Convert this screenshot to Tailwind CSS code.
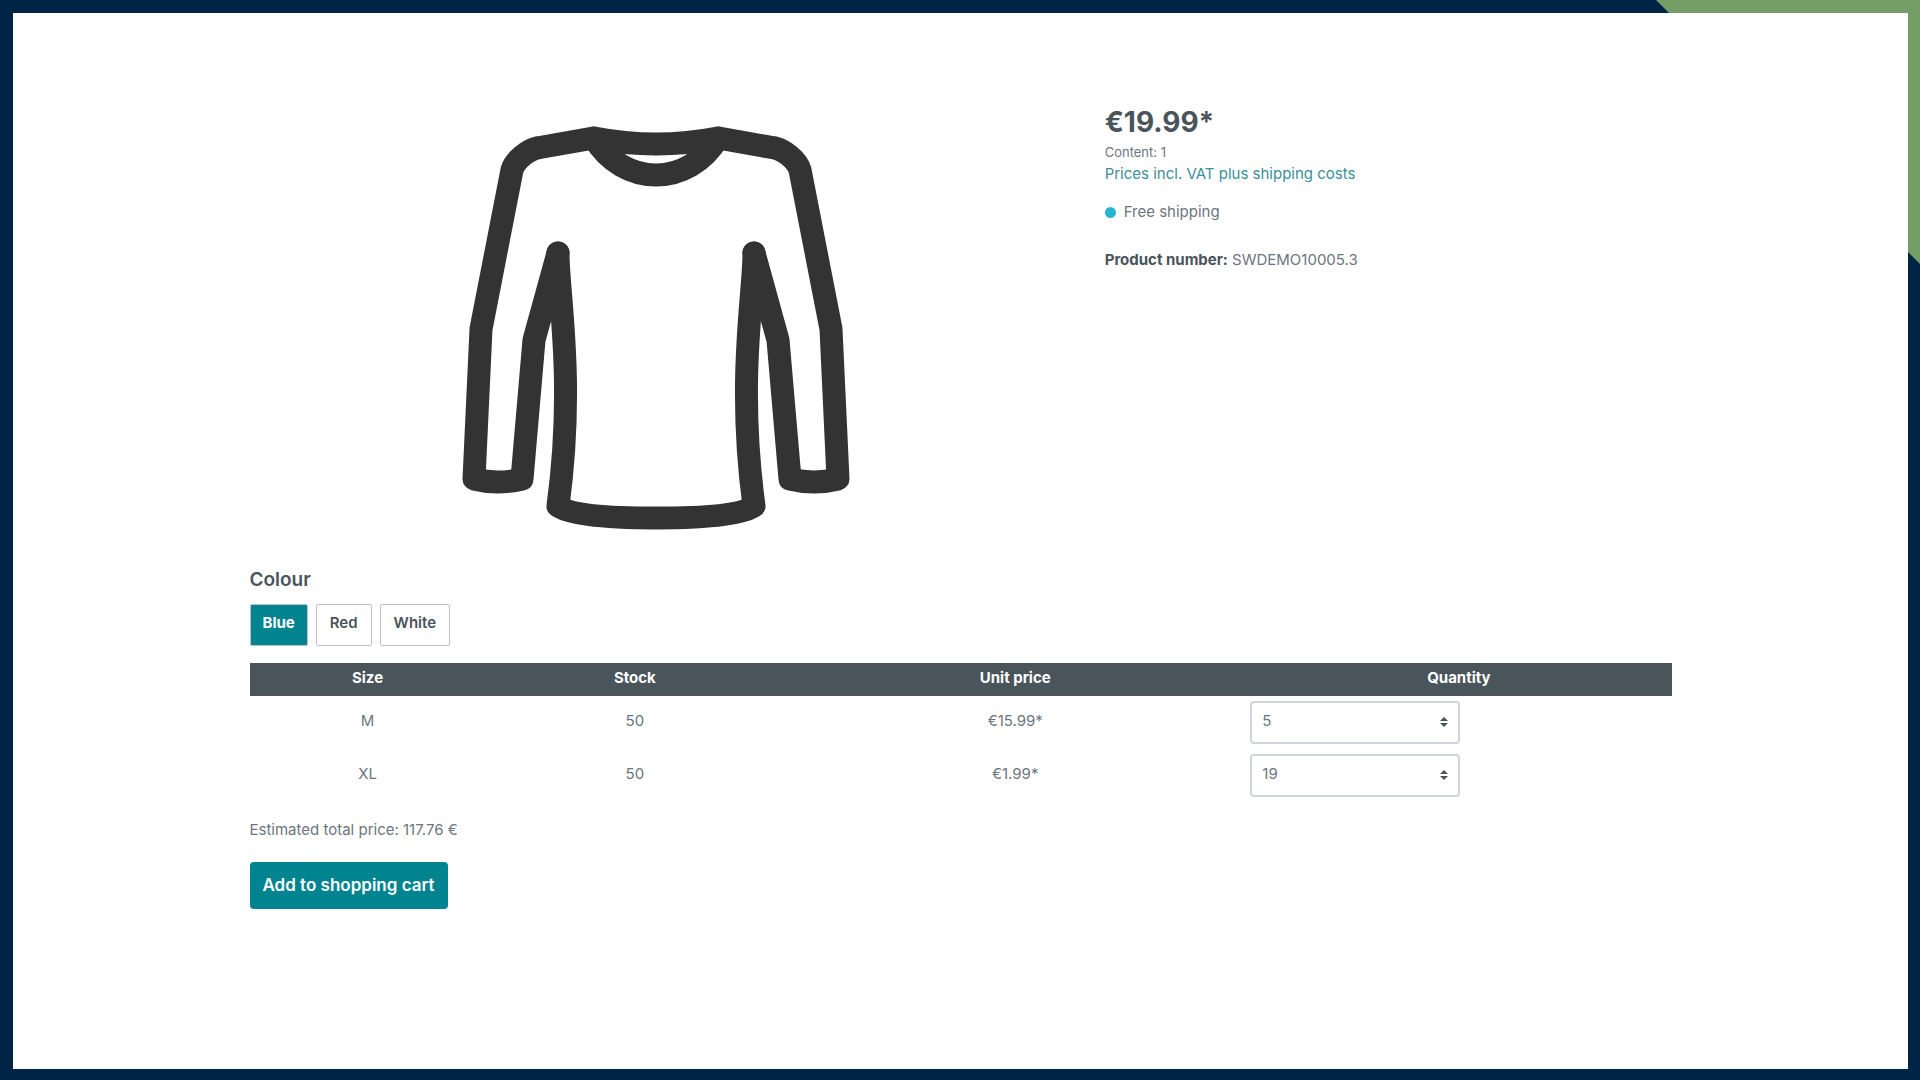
<!DOCTYPE html>
<html lang="en">
<head>
  <meta charset="UTF-8">
  <meta name="viewport" content="width=device-width, initial-scale=1.0">
  <title>Product detail</title>
  <script src="https://cdn.jsdelivr.net/npm/@tailwindcss/browser@4"></script>
</head>
<body class="font-['Inter',sans-serif] text-[15px] text-[#6c7680] antialiased">
  <div class="relative flex min-h-screen bg-[#002446] pt-[13px] pr-3 pb-[11px] pl-[13px]">
    <div class="absolute top-0 right-0 size-66 bg-[#759d66] [clip-path:polygon(0_0,100%_0,100%_100%)]"></div>

    <main class="relative flex-1 bg-white px-4 pt-[87px] pb-12">
      <div class="mx-auto max-w-[1422px]">

        <section class="grid grid-cols-12 gap-11">
          <div class="col-span-7 flex justify-center pt-5 pl-0.5">
            <svg class="h-[416px] w-[400px]" viewBox="0 0 400 416" fill="none" stroke="#333" stroke-width="23" stroke-linejoin="round" stroke-linecap="round" role="img" aria-label="Longsleeve">
              <!-- neckline -->
              <path stroke-linejoin="miter" stroke-linecap="butt" d="M81 28L138 18Q200 30 262 18L319 28" />
              <path stroke-linecap="butt" d="M138 18C152 42 176 55 200 55S248 42 262 18" />
              <!-- shoulders and sleeves -->
              <path d="M81 28C72 30 59 40 56 50L25 209L18 359Q42 365 66 359L78 220L102 133" />
              <path d="M319 28C328 30 341 40 344 50L375 209L382 359Q358 365 334 359L322 220L298 133" />
              <!-- body -->
              <path d="M102 133C102 175 119 260 102 386C115 396 160 398 200 398S285 396 298 386C281 260 298 175 298 133" />
            </svg>
          </div>

          <div class="col-span-5 pt-1">
            <p class="text-[28px] leading-9 font-bold text-[#4a545b]">€19.99*</p>
            <p class="text-[13px] leading-6">Content: 1</p>
            <a href="#" class="block leading-5 text-[#3c8f9b]">Prices incl. VAT plus shipping costs</a>
            <p class="mt-4 flex items-center gap-2 leading-6">
              <span class="size-[11px] rounded-full bg-[#26b6cf]"></span>
              Free shipping
            </p>
            <p class="mt-6 leading-6"><strong class="font-bold text-[#4a545b]">Product number:</strong> SWDEMO10005.3</p>
          </div>
        </section>

        <section class="mt-7">
          <h2 class="text-[19px] leading-8 font-semibold text-[#4a545b]">Colour</h2>
          <div class="mt-2 flex gap-2 font-semibold text-[#4a545b]">
            <button type="button" class="h-[42px] rounded-xs border border-[#bcc1c7] bg-[#00848f] px-3 pb-1 font-bold text-white">Blue</button>
            <button type="button" class="h-[42px] rounded-xs border border-[#bcc1c7] px-[13px] pb-1">Red</button>
            <button type="button" class="h-[42px] rounded-xs border border-[#bcc1c7] px-[13px] pb-1">White</button>
          </div>
        </section>

        <table class="mt-[17px] w-full table-fixed text-center">
          <thead class="bg-[#4a545b] text-white">
            <tr class="h-[33px] leading-7">
              <th class="w-[16.6%] pb-1 font-bold">Size</th>
              <th class="w-[21%] pb-1 font-bold">Stock</th>
              <th class="w-[32.5%] pb-1 font-bold">Unit price</th>
              <th class="w-[29.9%] pb-1 font-bold">Quantity</th>
            </tr>
          </thead>
          <tbody>
            <tr class="h-[53px]">
              <td class="pb-0.5">M</td>
              <td class="pb-0.5">50</td>
              <td class="pb-0.5">€15.99*</td>
              <td class="pl-1">
                <div class="relative w-[210px]">
                  <select aria-label="Quantity M" class="h-[43px] w-full appearance-none rounded-sm border-2 border-[#d1d5db] bg-white px-2.5 pb-0.5">
                    <option>5</option>
                  </select>
                  <svg class="pointer-events-none absolute top-[15px] right-3 h-3 w-2" viewBox="0 0 8 12" fill="#4a545b"><path d="M4 1L8 5H0ZM4 11L0 7H8Z" /></svg>
                </div>
              </td>
            </tr>
            <tr class="h-[53px]">
              <td class="pb-0.5">XL</td>
              <td class="pb-0.5">50</td>
              <td class="pb-0.5">€1.99*</td>
              <td class="pl-1">
                <div class="relative w-[210px]">
                  <select aria-label="Quantity XL" class="h-[43px] w-full appearance-none rounded-sm border-2 border-[#d1d5db] bg-white px-2.5 pb-0.5">
                    <option>19</option>
                  </select>
                  <svg class="pointer-events-none absolute top-[15px] right-3 h-3 w-2" viewBox="0 0 8 12" fill="#4a545b"><path d="M4 1L8 5H0ZM4 11L0 7H8Z" /></svg>
                </div>
              </td>
            </tr>
          </tbody>
        </table>

        <p class="mt-4 leading-6">Estimated total price: 117.76 €</p>
        <button type="button" class="mt-5 h-[47px] rounded-sm bg-[#00848f] px-[13px] text-[17px] font-semibold text-white">Add to shopping cart</button>
      </div>
    </main>
  </div>
</body>
</html>
